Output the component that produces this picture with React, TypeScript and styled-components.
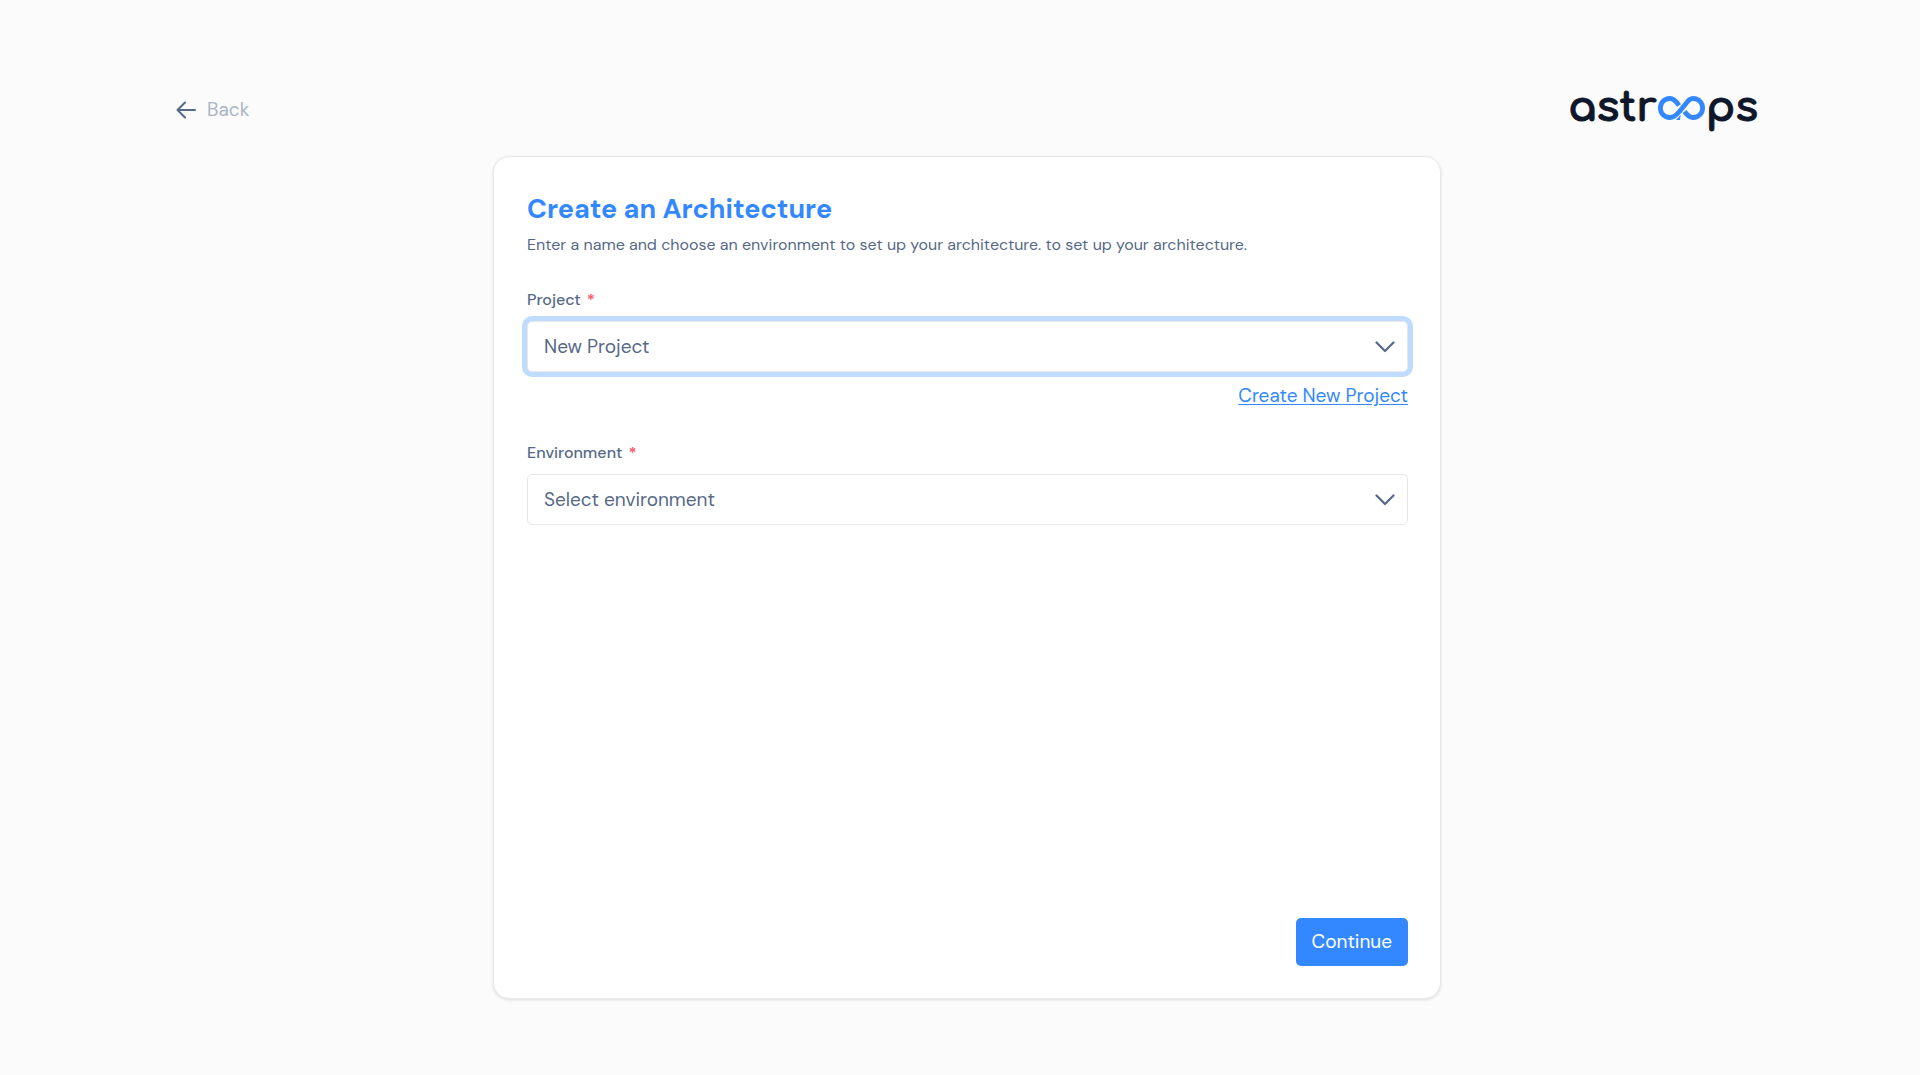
import React, { useId, useState } from "react";
import styled, { createGlobalStyle } from "styled-components";

const color = {
  page: "#fbfbfb",
  card: "#ffffff",
  line: "#e8e8e8",
  blue: "#3388ff",
  ring: "#bfdbfe",
  text: "#556987",
  muted: "#a9b5c6",
  danger: "#fb5c68",
  ink: "#0f172a",
};

const GlobalStyle = createGlobalStyle`
  *, *::before, *::after { box-sizing: border-box; }
  body {
    margin: 0;
    background: ${color.page};
    color: ${color.text};
    font-family: "DM Sans", Inter, "Liberation Sans", sans-serif;
    font-size: 19px;
    line-height: 28px;
  }
  button, select { font: inherit; }
`;

const Page = styled.div`
  display: flex;
  flex-direction: column;
  min-height: 100vh;
  padding: 84px 162px 76px 176px;
`;

const Header = styled.header`
  display: flex;
  align-items: center;
  justify-content: space-between;
  height: 52px;
  margin-bottom: 20px;
`;

const BackLink = styled.a`
  display: inline-flex;
  align-items: center;
  gap: 11px;
  color: ${color.muted};
  text-decoration: none;
`;

const Brand = styled.div`
  display: flex;
  align-items: center;
  align-self: flex-start;
  gap: 1px;
  color: ${color.ink};
  font-family: Comfortaa, Quicksand, Inter, "Liberation Sans", sans-serif;
  font-size: 42px;
  font-weight: 700;
  line-height: 48px;
  -webkit-text-stroke: 1px ${color.ink};
`;

const Card = styled.main`
  display: flex;
  flex: 1;
  flex-direction: column;
  width: 100%;
  max-width: 948px;
  margin: 0 auto;
  padding: 32px 32px 32px 33px;
  background: ${color.card};
  border: 1px solid ${color.line};
  border-radius: 16px;
  box-shadow: 0 1px 3px rgba(0, 0, 0, 0.12);
`;

const Title = styled.h1`
  margin: 0;
  color: ${color.blue};
  font-size: 27px;
  font-weight: 700;
  line-height: 40px;
`;

const Lead = styled.p`
  margin: 4px 0 31px;
  font-size: 16px;
  line-height: 24px;
`;

const Form = styled.form`
  display: flex;
  flex: 1;
  flex-direction: column;
`;

const Field = styled.div`
  display: flex;
  flex-direction: column;
  margin-bottom: 31px;
`;

const Label = styled.label`
  margin-bottom: 9px;
  font-size: 16px;
  font-weight: 500;
  line-height: 24px;
`;

const Required = styled.span`
  margin-left: 6px;
  color: ${color.danger};
  font-weight: 700;
`;

const SelectBox = styled.div`
  display: grid;
  align-items: center;

  > * { grid-area: 1 / 1; }
  > svg { justify-self: end; margin-right: 13px; pointer-events: none; }
`;

const Select = styled.select<{ $active?: boolean }>`
  width: 100%;
  height: 51px;
  padding: 0 48px 0 16px;
  appearance: none;
  color: ${color.text};
  background: ${color.card};
  border: 1px solid ${color.line};
  border-radius: 5px;
  outline: none;
  box-shadow: ${(p) => (p.$active ? `0 0 0 5px ${color.ring}` : "none")};
`;

const TextLink = styled.a`
  align-self: flex-end;
  margin-top: 10px;
  color: ${color.blue};
  text-decoration: underline;
  text-underline-offset: 2px;
`;

const Actions = styled.div`
  display: flex;
  justify-content: flex-end;
  margin-top: auto;
`;

const Button = styled.button`
  height: 48px;
  padding: 0 16px;
  color: #ffffff;
  background: ${color.blue};
  border: 0;
  border-radius: 5px;
  cursor: pointer;
`;

const ArrowLeft = () => (
  <svg width="20" height="18" viewBox="0 0 20 18" fill="none" stroke={color.text} strokeWidth="2" strokeLinecap="round" strokeLinejoin="round" aria-hidden="true">
    <path d="M19 9H2M9 1.5L1.5 9L9 16.5" />
  </svg>
);

const ChevronDown = () => (
  <svg width="20" height="12" viewBox="0 0 20 12" fill="none" stroke={color.text} strokeWidth="2.2" strokeLinecap="round" strokeLinejoin="round" aria-hidden="true">
    <path d="M1.5 1.5L10 10L18.5 1.5" />
  </svg>
);

const Infinity = () => (
  <svg width="47" height="24" viewBox="0 0 47 24" fill="none" stroke={color.blue} strokeWidth="4.8" aria-hidden="true">
    <path d="M21 9.500C18 5 15.500 2.500 12 2.500C6 2.500 2.400 7 2.400 12C2.400 17 6 21.500 12 21.500C16 21.500 18.500 19 21 16L28 7.500C30 4.500 32 2.500 35 2.500C41 2.500 44.600 7 44.600 12C44.600 17 41 21.500 35 21.500C31.500 21.500 29 19 26.500 15.500" />
    <path d="M22.700 19L18 24H22Z" fill={color.blue} stroke="none" />
  </svg>
);

type DropdownProps = {
  label: string;
  options: string[];
  active?: boolean;
  children?: React.ReactNode;
};

function Dropdown({ label, options, active, children }: DropdownProps) {
  const id = useId();
  const [value, setValue] = useState(options[0]);
  return (
    <Field>
      <Label htmlFor={id}>
        {label}
        <Required>*</Required>
      </Label>
      <SelectBox>
        <Select id={id} $active={active} value={value} onChange={(e) => setValue(e.target.value)}>
          {options.map((o) => (
            <option key={o}>{o}</option>
          ))}
        </Select>
        <ChevronDown />
      </SelectBox>
      {children}
    </Field>
  );
}

export default function App() {
  return (
    <>
      <GlobalStyle />
      <Page>
        <Header>
          <BackLink href="#back">
            <ArrowLeft />
            Back
          </BackLink>
          <Brand>
            <span>astr</span>
            <Infinity />
            <span>ps</span>
          </Brand>
        </Header>
        <Card>
          <Title>Create an Architecture</Title>
          <Lead>Enter a name and choose an environment to set up your architecture. to set up your architecture.</Lead>
          <Form onSubmit={(e) => e.preventDefault()}>
            <Dropdown label="Project" options={["New Project"]} active>
              <TextLink href="#new-project">Create New Project</TextLink>
            </Dropdown>
            <Dropdown label="Environment" options={["Select environment"]} />
            <Actions>
              <Button type="submit">Continue</Button>
            </Actions>
          </Form>
        </Card>
      </Page>
    </>
  );
}
